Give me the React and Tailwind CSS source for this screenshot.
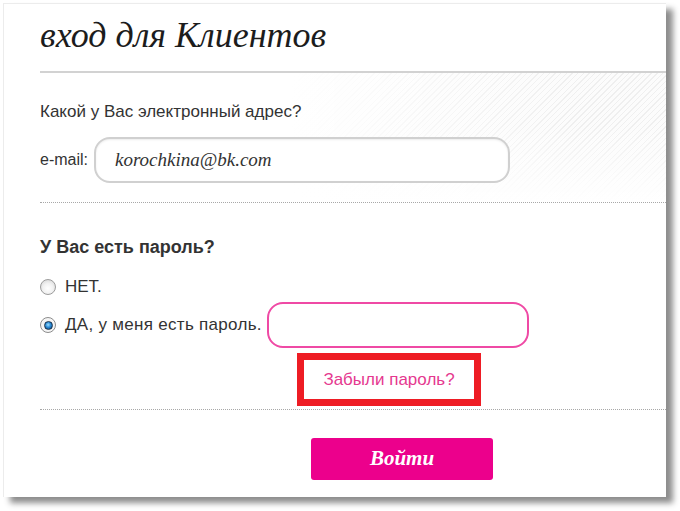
export default function App() {
  const sans = { fontFamily: '"Liberation Sans", Arial, sans-serif' };
  return (
    <div className="w-[680px] h-[511px] bg-white overflow-hidden pt-[3px] pl-[3px]">
      <div className="w-[663px] h-[494px] bg-white border-l border-t border-[#ececec] shadow-[7px_6px_6px_rgba(0,0,0,0.45)] flex flex-col">
        {/* Title */}
        <div className="h-[67px] pt-[13px] pl-[36px]">
          <h1 className="text-[36px] leading-[36px] italic text-[#1c1c1c] font-['Liberation_Serif',serif]">
            вход для Клиентов
          </h1>
        </div>
        <div className="ml-[36px] h-[2px] bg-[#d2d2d2]" />

        {/* Email section */}
        <div
          className="ml-[36px] h-[129px] pt-[29px] bg-[image:linear-gradient(to_right,#ffffff_40%,rgba(255,255,255,0.2)_85%),linear-gradient(to_top,#ffffff_0%,rgba(255,255,255,0)_60%),repeating-linear-gradient(135deg,#ebebeb_0px,#ebebeb_1px,#fbfbfb_1px,#fbfbfb_4px)]"
          style={sans}
        >
          <p className="text-[17px] leading-[20px] text-[#333]">Какой у Вас электронный адрес?</p>
          <div className="mt-[15px] flex items-center">
            <span className="w-[54px] text-[16px] leading-[20px] text-[#333]">e-mail:</span>
            <div className="w-[416px] h-[46px] rounded-[16px] border-2 border-[#d0d0d0] bg-white flex items-center pl-[19px] shadow-[inset_0_1px_2px_rgba(0,0,0,0.08)]">
              <span className="text-[19px] italic text-[#333] font-['Liberation_Serif',serif]">korochkina@bk.com</span>
            </div>
          </div>
        </div>
        <div className="ml-[36px] border-t border-dotted border-[#a8a8a8]" />

        {/* Password section */}
        <div className="ml-[36px] h-[206px] pt-[34px]" style={sans}>
          <p className="text-[18px] leading-[20px] font-bold text-[#333]">У Вас есть пароль?</p>
          <div className="mt-[20px] flex items-center h-[20px]">
            <span className="w-[16px] h-[16px] rounded-full border border-[#9c9c9c] bg-[radial-gradient(circle_at_50%_60%,#ffffff_0%,#f2f2f2_45%,#cfcfcf_100%)]" />
            <span className="ml-[9px] text-[17px] leading-[20px] text-[#333]">НЕТ.</span>
          </div>
          <div className="mt-[5px] flex items-center h-[46px]">
            <span className="w-[16px] h-[16px] rounded-full border border-[#8c8c8c] bg-[radial-gradient(circle,#e6e6e6_0%,#ffffff_100%)] flex items-center justify-center">
              <span className="w-[9px] h-[9px] rounded-full bg-[radial-gradient(circle_at_45%_40%,#9be0ff_0%,#2a8ad6_45%,#0b3d6e_100%)] border border-[#1b3550]" />
            </span>
            <span className="ml-[9px] w-[202px] whitespace-nowrap text-[17px] leading-[20px] tracking-[0.3px] text-[#333]">ДА, у меня есть пароль.</span>
            <div className="w-[262px] h-[46px] rounded-[16px] border-2 border-[#ef4aa5] bg-white" />
          </div>
          <div className="mt-[5px] ml-[257px] w-[184px] h-[53px] border-[7px] border-[#ee1c24] flex items-center justify-center">
            <span className="text-[17px] leading-[20px] text-[#e5398f]">Забыли пароль?</span>
          </div>
        </div>
        <div className="ml-[36px] border-t border-dotted border-[#a8a8a8]" />

        {/* Button */}
        <div className="pt-[28px] pl-[307px]">
          <div className="w-[182px] h-[42px] rounded-[3px] bg-[#ec008c] flex items-center justify-center">
            <span className="text-[21px] font-bold italic text-white font-['Liberation_Serif',serif]">Войти</span>
          </div>
        </div>
      </div>
    </div>
  );
}
